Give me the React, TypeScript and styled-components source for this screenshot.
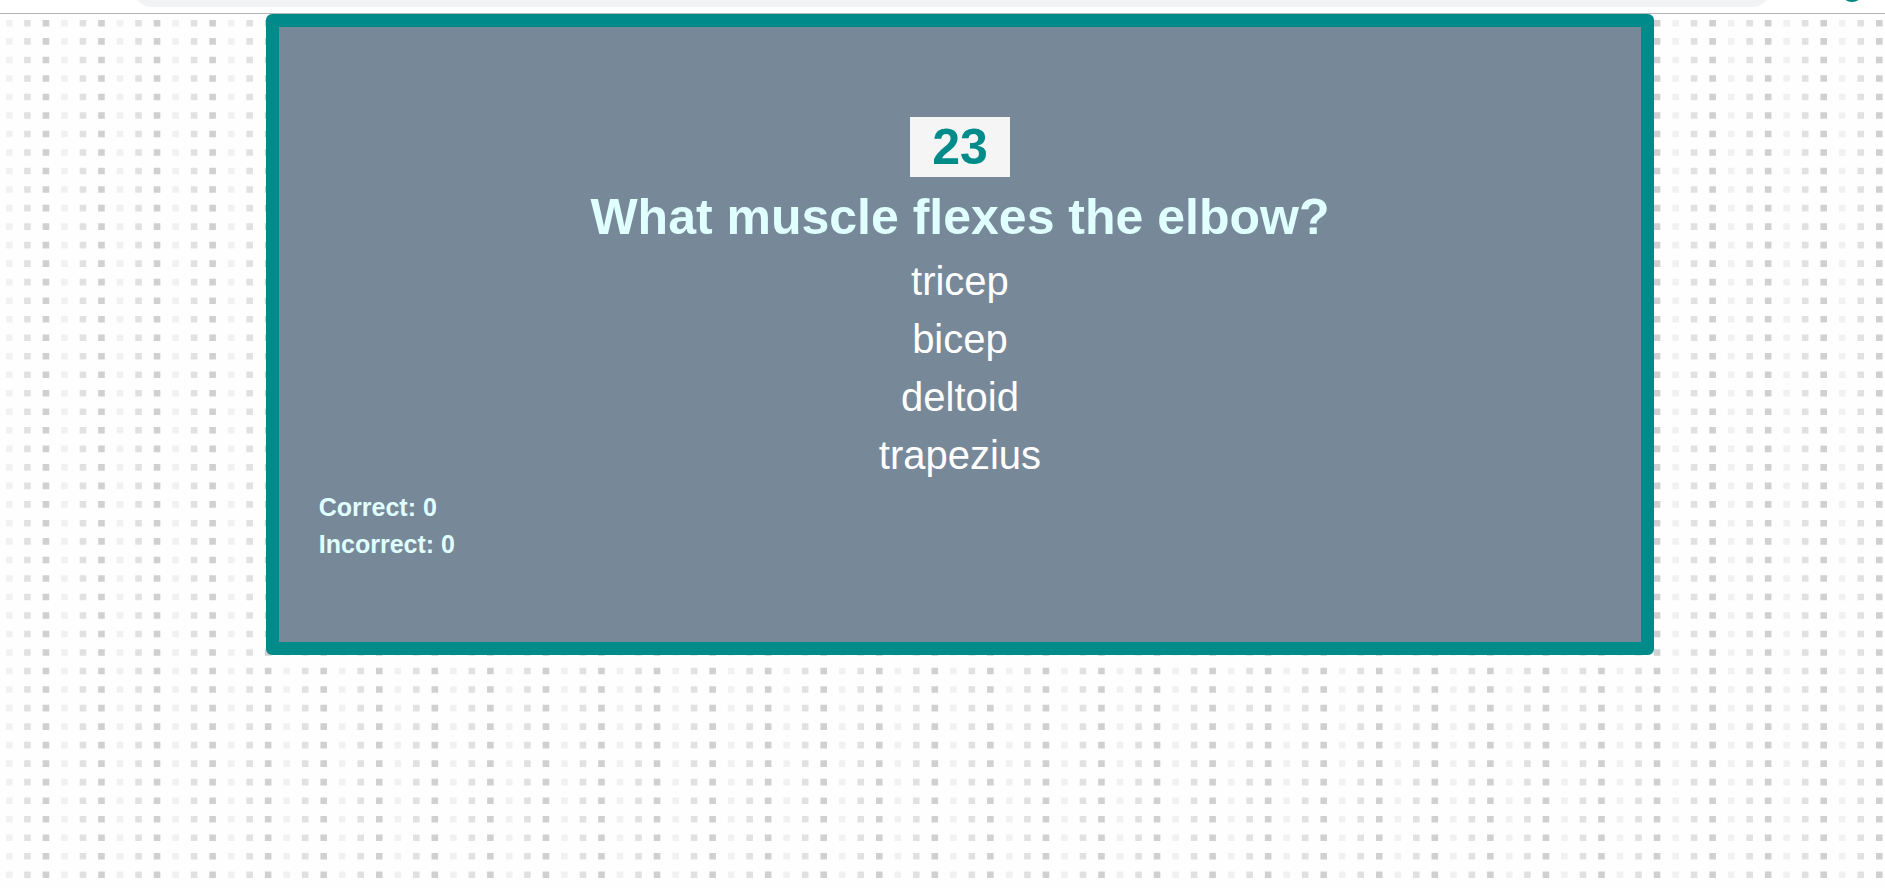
import React, { useState } from "react";
import styled, { createGlobalStyle } from "styled-components";

const GlobalStyle = createGlobalStyle`
  *, *::before, *::after { box-sizing: border-box; }
  html, body, #root { height: 100%; }
  body {
    margin: 0;
    background: #fefefe;
    font-family: "Liberation Sans", Arial, sans-serif;
  }
`;

const Page = styled.div`
  display: flex;
  flex-direction: column;
  min-height: 100%;
`;

const BrowserBar = styled.div`
  display: flex;
  align-items: flex-start;
  gap: 72px;
  height: 14px;
  padding: 0 23px 0 134px;
  background: #ffffff;
  border-bottom: 1px solid #b4b5b6;
  overflow: hidden;
`;

const AddressField = styled.div`
  flex: 1;
  height: 34px;
  margin-top: -27px;
  background: #f1f3f4;
  border-radius: 17px;
`;

const Stage = styled.div`
  display: grid;
  flex: 1;
  grid-template: minmax(0, 1fr) / minmax(0, 1fr);
`;

const Dots = styled.svg`
  grid-area: 1 / 1;
  width: 100%;
  height: 100%;
`;

const Content = styled.main`
  grid-area: 1 / 1;
  z-index: 1;
  padding: 0 12.25% 0 14.1%;
`;

const Card = styled.section`
  display: flex;
  flex-direction: column;
  align-items: center;
  padding: 90px 40px 79px;
  background: #778899;
  border: 13px solid #008b8b;
  border-radius: 6px;
`;

const Timer = styled.div`
  width: 100px;
  background: #f5f5f5;
  color: #008b8b;
  font-size: 50px;
  font-weight: 700;
  line-height: 60px;
  text-align: center;
`;

const Question = styled.h1`
  margin: 10px 0;
  color: #e0ffff;
  font-size: 50px;
  font-weight: 700;
  line-height: 60px;
  text-align: center;
`;

const Answers = styled.ul`
  display: flex;
  flex-direction: column;
  align-items: center;
  margin: 0;
  padding: 0;
  list-style: none;
`;

const Answer = styled.button`
  display: block;
  padding: 0 0 10px;
  border: 0;
  background: none;
  color: #ffffff;
  font-family: inherit;
  font-size: 40px;
  line-height: 48px;
  cursor: pointer;
`;

const Scores = styled.div`
  align-self: stretch;
`;

const Score = styled.p`
  margin: 0;
  color: #e0ffff;
  font-size: 25px;
  font-weight: 700;
  line-height: 37px;
`;

const TILE = 500;
const DOTS_PER_TILE = 27;
const DOT_SIZE = 6.6;
const TONES = ["#f1f1f1", "#e1e1e1", "#d0d0d0"];

const step = (n: number) =>
  Math.max(0, (n * TILE) / DOTS_PER_TILE - 0.4).toFixed(2);

function tonePath(tone: number) {
  let d = "";
  for (let col = tone; col < DOTS_PER_TILE; col += TONES.length) {
    for (let row = 0; row < DOTS_PER_TILE; row += 1) {
      d += `M${step(col)} ${step(row)}h${DOT_SIZE}v${DOT_SIZE}h-${DOT_SIZE}z`;
    }
  }
  return d;
}

function DottedBackground() {
  return (
    <Dots aria-hidden="true">
      <defs>
        <pattern id="dots" x="6" y="6" width={TILE} height={TILE} patternUnits="userSpaceOnUse">
          {TONES.map((color, tone) => (
            <path key={color} d={tonePath(tone)} fill={color} />
          ))}
        </pattern>
      </defs>
      <rect width="100%" height="100%" fill="url(#dots)" />
    </Dots>
  );
}

const ANSWERS = ["tricep", "bicep", "deltoid", "trapezius"];
const CORRECT_ANSWER = "bicep";

export default function App() {
  const [correct, setCorrect] = useState(0);
  const [incorrect, setIncorrect] = useState(0);

  const choose = (answer: string) => {
    if (answer === CORRECT_ANSWER) setCorrect(correct + 1);
    else setIncorrect(incorrect + 1);
  };

  return (
    <Page>
      <GlobalStyle />
      <BrowserBar>
        <AddressField />
        <svg width="20" height="3" aria-hidden="true">
          <circle cx="10" cy="-10" r="12" fill="#00897b" />
        </svg>
      </BrowserBar>
      <Stage>
        <DottedBackground />
        <Content>
          <Card>
            <Timer role="timer">23</Timer>
            <Question>What muscle flexes the elbow?</Question>
            <Answers>
              {ANSWERS.map((answer) => (
                <li key={answer}>
                  <Answer type="button" onClick={() => choose(answer)}>
                    {answer}
                  </Answer>
                </li>
              ))}
            </Answers>
            <Scores>
              <Score>Correct: {correct}</Score>
              <Score>Incorrect: {incorrect}</Score>
            </Scores>
          </Card>
        </Content>
      </Stage>
    </Page>
  );
}
